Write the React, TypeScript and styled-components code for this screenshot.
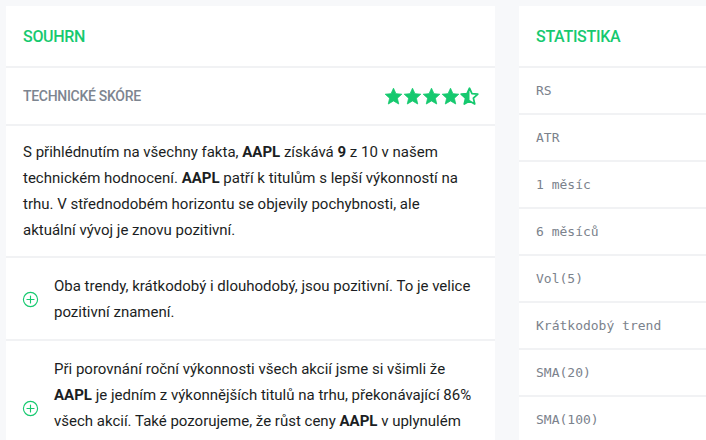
import { styled, createGlobalStyle } from "styled-components";

const GREEN = "#16c96f";

const GlobalStyle = createGlobalStyle`
  html, body {
    margin: 0;
    padding: 0;
    background: #f7f8fa;
    overflow: hidden;
  }
  * {
    box-sizing: border-box;
  }
`;

const STAR = "M12 1.5l3.1 6.9 7.4.7-5.6 5 1.7 7.4L12 17.6l-6.6 3.9 1.7-7.4-5.6-5 7.4-.7z";

const StarIcon = ({ half }: { half?: boolean }) => (
  <svg width="19" height="19" viewBox="0 0 24 24">
    <defs>
      <clipPath id="leftHalf">
        <rect x="0" y="0" width="12" height="24" />
      </clipPath>
    </defs>
    {half ? (
      <>
        <path d={STAR} fill="none" stroke={GREEN} strokeWidth="2.2" strokeLinejoin="round" />
        <path d={STAR} fill={GREEN} clipPath="url(#leftHalf)" />
      </>
    ) : (
      <path d={STAR} fill={GREEN} stroke={GREEN} strokeWidth="1" strokeLinejoin="round" />
    )}
  </svg>
);

const PlusCircle = () => (
  <svg width="17" height="17" viewBox="0 0 24 24" fill="none">
    <circle cx="12" cy="12" r="10" stroke={GREEN} strokeWidth="1.6" />
    <path d="M12 7v10M7 12h10" stroke={GREEN} strokeWidth="1.6" strokeLinecap="round" />
  </svg>
);

const stats = [
  "RS",
  "ATR",
  "1 měsíc",
  "6 měsíců",
  "Vol(5)",
  "Krátkodobý trend",
  "SMA(20)",
  "SMA(100)",
  "SMA(200)",
];

const App = () => {
  return (
    <>
      <GlobalStyle />
      <St.Page>
        <St.Card $width={489}>
          <St.Header>
            <St.Title>Souhrn</St.Title>
          </St.Header>
          <St.ScoreRow>
            <St.Label>Technické skóre</St.Label>
            <St.Stars>
              <StarIcon />
              <StarIcon />
              <StarIcon />
              <StarIcon />
              <StarIcon half />
            </St.Stars>
          </St.ScoreRow>
          <St.Summary>
            S přihlédnutím na všechny fakta, <b>AAPL</b> získává <b>9</b> z 10 v našem
            technickém hodnocení. <b>AAPL</b> patří k titulům s lepší výkonností na
            trhu. V střednodobém horizontu se objevily pochybnosti, ale aktuální
            vývoj je znovu pozitivní.
          </St.Summary>
          <St.Point>
            <St.IconBox>
              <PlusCircle />
            </St.IconBox>
            <St.PointText>
              Oba trendy, krátkodobý i dlouhodobý, jsou pozitivní. To je velice
              pozitivní znamení.
            </St.PointText>
          </St.Point>
          <St.Point>
            <St.IconBox>
              <PlusCircle />
            </St.IconBox>
            <St.PointText>
              Při porovnání roční výkonnosti všech akcií jsme si všimli že{" "}
              <b>AAPL</b> je jedním z výkonnějších titulů na trhu, překonávající 86%
              všech akcií. Také pozorujeme, že růst ceny <b>AAPL</b> v uplynulém
              roce je konzistentní a stabilní, což je velmi pozitivní.
            </St.PointText>
          </St.Point>
        </St.Card>
        <St.Card $width={260}>
          <St.Header>
            <St.Title>Statistika</St.Title>
          </St.Header>
          {stats.map((s) => (
            <St.StatRow key={s}>
              <St.StatLabel>{s}</St.StatLabel>
            </St.StatRow>
          ))}
        </St.Card>
      </St.Page>
    </>
  );
};

export default App;

const St = {
  Page: styled.main`
    display: flex;
    align-items: flex-start;
    gap: 24px;
    padding: 6px;
    width: 800px;
    font-family: Roboto, "Liberation Sans", sans-serif;
  `,
  Card: styled.section<{ $width: number }>`
    flex: 0 0 ${({ $width }) => $width}px;
    display: flex;
    flex-direction: column;
    gap: 2px;
    background: #f1f2f4;
  `,
  Header: styled.div`
    display: flex;
    align-items: center;
    height: 60px;
    padding: 0 17px;
    background: #fff;
  `,
  Title: styled.h2`
    margin: 0;
    font-size: 16px;
    font-weight: 500;
    letter-spacing: -0.3px;
    text-transform: uppercase;
    color: ${GREEN};
  `,
  ScoreRow: styled.div`
    display: flex;
    align-items: center;
    justify-content: space-between;
    height: 56px;
    padding: 0 17px;
    background: #fff;
  `,
  Label: styled.span`
    font-size: 14px;
    font-weight: 500;
    letter-spacing: -0.3px;
    text-transform: uppercase;
    color: #7d8590;
  `,
  Stars: styled.div`
    display: flex;
    gap: 0;
    margin-right: -1px;
  `,
  Summary: styled.p`
    margin: 0;
    padding: 13px 30px 13px 17px;
    background: #fff;
    font-size: 15px;
    line-height: 26px;
    color: #1b1e23;

    & b {
      font-weight: 700;
    }
  `,
  Point: styled.div`
    display: flex;
    align-items: center;
    gap: 15px;
    padding: 15px 17px 14px;
    background: #fff;
  `,
  IconBox: styled.span`
    display: flex;
    flex: 0 0 17px;
    margin-left: -1px;
  `,
  PointText: styled.p`
    margin: 0;
    font-size: 15px;
    line-height: 26px;
    color: #1b1e23;

    & b {
      font-weight: 700;
    }
  `,
  StatRow: styled.div`
    display: flex;
    align-items: center;
    height: 45px;
    padding: 0 17px;
    background: #fff;
  `,
  StatLabel: styled.span`
    font-family: "DejaVu Sans Mono", "Liberation Mono", monospace;
    font-size: 13px;
    color: #7b828c;
  `,
};
